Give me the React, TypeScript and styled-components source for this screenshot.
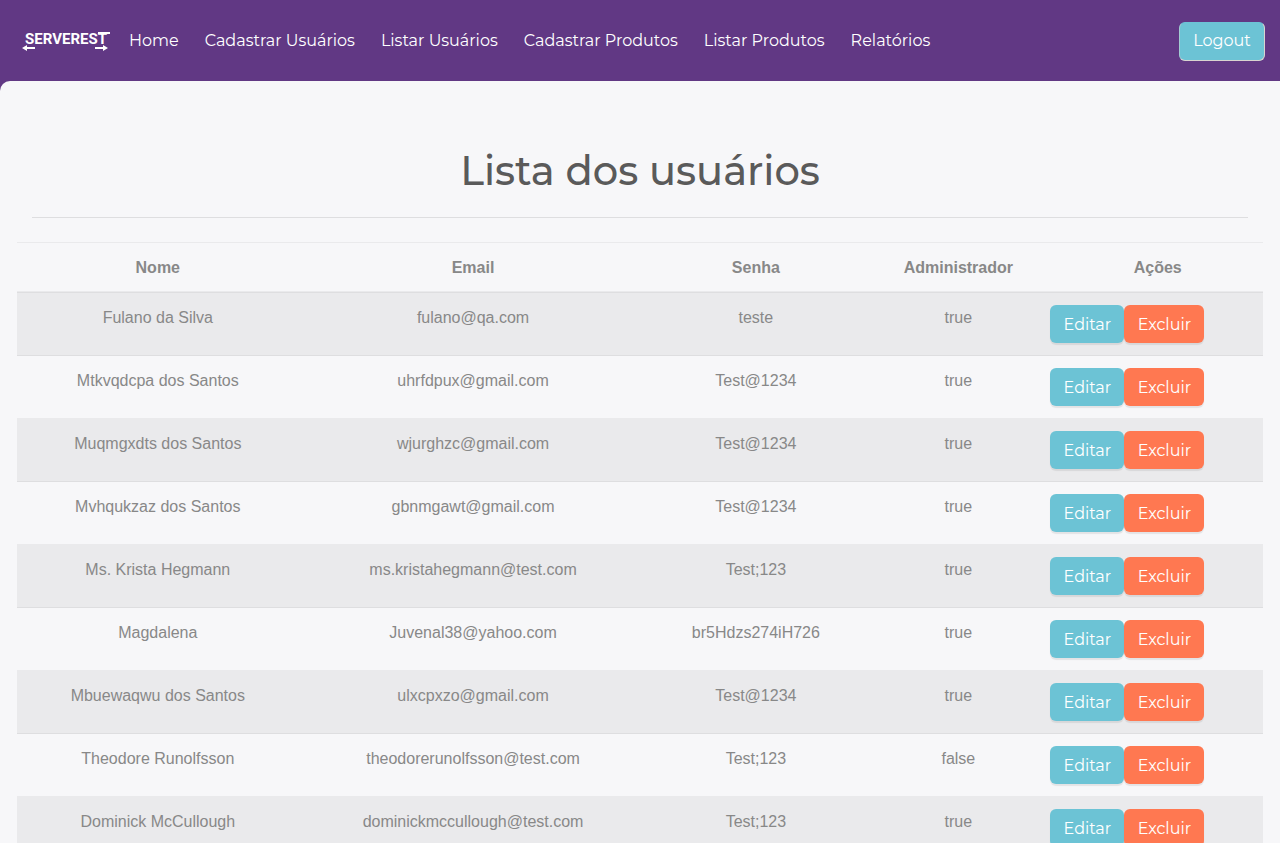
import React from "react";
import styled, { createGlobalStyle } from "styled-components";

const GlobalStyle = createGlobalStyle`
  *, *::before, *::after { box-sizing: border-box; }
  body {
    margin: 0;
    background: #613884;
    color: #888888;
    font-family: "Liberation Sans", Arial, sans-serif;
    font-size: 16px;
    line-height: 24px;
  }
`;

const display = `Montserrat, Inter, sans-serif`;

const Navbar = styled.nav`
  display: flex;
  align-items: flex-start;
  padding: 22px 15px 20px 21px;
`;

const Brand = styled.a`
  display: block;
  width: 90px;
  height: 26px;
  margin: 6px 5px 0 0;
`;

const NavList = styled.ul`
  display: flex;
  flex: 1;
  margin: 0;
  padding: 0;
  list-style: none;
`;

const NavLink = styled.a`
  display: block;
  padding: 7px 13px;
  color: #ffffff;
  font-family: ${display};
  font-size: 16px;
  text-decoration: none;
  white-space: nowrap;
`;

const Button = styled.button<{ $tone?: "danger"; $width: number }>`
  width: ${(p) => p.$width}px;
  height: 38px;
  padding: 2px 0 0;
  border: 0;
  border-radius: 6px;
  background: ${(p) => (p.$tone === "danger" ? "#ff7851" : "#6cc3d5")};
  color: #ffffff;
  font-family: ${display};
  font-size: 16px;
  line-height: 24px;
  cursor: pointer;
  box-shadow: 0 2px 1px rgba(0, 0, 0, 0.08);
`;

const LogoutButton = styled(Button)`
  height: 39px;
  padding: 0 0 1px;
  border: 1px solid #d9d4d0;
  border-top-color: #6cc3d5;
  border-left-color: #a3cbd2;
  box-shadow: none;
`;

const Panel = styled.main`
  padding: 66px 17px 32px;
  border-top-left-radius: 10px;
  background: #f7f7f9;
`;

const Title = styled.h1`
  margin: 0 15px 24px;
  padding-bottom: 22px;
  border-bottom: 1px solid #dedee0;
  color: #5a5a5a;
  font-family: ${display};
  font-size: 40px;
  font-weight: 500;
  line-height: 48px;
  text-align: center;
`;

const Table = styled.table`
  width: 100%;
  table-layout: fixed;
  border-collapse: collapse;
  text-align: center;
`;

const Col = styled.col<{ $share: number }>`
  width: ${(p) => p.$share}%;
`;

const HeadCell = styled.th`
  padding: 13px 12px 11px;
  border-top: 1px solid rgba(0, 0, 0, 0.05);
  border-bottom: 2px solid rgba(0, 0, 0, 0.05);
  font-weight: 700;
`;

const Row = styled.tr`
  &:nth-child(odd) {
    background: rgba(0, 0, 0, 0.05);
  }
`;

const Cell = styled.td`
  padding: 13px 12px 11px;
  border-top: 1px solid rgba(0, 0, 0, 0.05);
  vertical-align: top;
`;

const ActionCell = styled(Cell)`
  padding: 12px 0;
`;

const Actions = styled.div`
  display: flex;
  margin-left: -2px;
`;

const links = [
  "Home",
  "Cadastrar Usuários",
  "Listar Usuários",
  "Cadastrar Produtos",
  "Listar Produtos",
  "Relatórios",
];

const users = [
  ["Fulano da Silva", "fulano@qa.com", "teste", "true"],
  ["Mtkvqdcpa dos Santos", "uhrfdpux@gmail.com", "Test@1234", "true"],
  ["Muqmgxdts dos Santos", "wjurghzc@gmail.com", "Test@1234", "true"],
  ["Mvhqukzaz dos Santos", "gbnmgawt@gmail.com", "Test@1234", "true"],
  ["Ms. Krista Hegmann", "ms.kristahegmann@test.com", "Test;123", "true"],
  ["Magdalena", "Juvenal38@yahoo.com", "br5Hdzs274iH726", "true"],
  ["Mbuewaqwu dos Santos", "ulxcpxzo@gmail.com", "Test@1234", "true"],
  ["Theodore Runolfsson", "theodorerunolfsson@test.com", "Test;123", "false"],
  ["Dominick McCullough", "dominickmccullough@test.com", "Test;123", "true"],
];

const Logo = () => (
  <svg width="90" height="26" viewBox="0 0 90 26" role="img" aria-label="ServeRest">
    <text
      x="45"
      y="16"
      textAnchor="middle"
      fill="#ffffff"
      fontFamily="Roboto, sans-serif"
      fontSize="15"
      fontWeight="700"
    >
      SERVEREST
    </text>
    <path d="M77 4h12v2H77z" fill="#ffffff" />
    <path d="M1 20l5-3v2h8v2H6v2z M87 20l-5-3v2h-8v2h8v2z" fill="#ffffff" />
  </svg>
);

export default function App() {
  return (
    <>
      <GlobalStyle />
      <Navbar>
        <Brand href="#home"><Logo /></Brand>
        <NavList>
          {links.map((label) => (
            <li key={label}><NavLink href="#">{label}</NavLink></li>
          ))}
        </NavList>
        <LogoutButton type="button" $width={86}>Logout</LogoutButton>
      </Navbar>
      <Panel>
        <Title>Lista dos usuários</Title>
        <Table>
          <colgroup>
            {[22.6, 28, 17.4, 15.1, 16.9].map((share, i) => (
              <Col key={i} $share={share} />
            ))}
          </colgroup>
          <thead>
            <tr>
              {["Nome", "Email", "Senha", "Administrador", "Ações"].map((label) => (
                <HeadCell key={label} scope="col">{label}</HeadCell>
              ))}
            </tr>
          </thead>
          <tbody>
            {users.map((user) => (
              <Row key={user[1]}>
                {user.map((value, i) => <Cell key={i}>{value}</Cell>)}
                <ActionCell>
                  <Actions>
                    <Button type="button" $width={74}>Editar</Button>
                    <Button type="button" $width={80} $tone="danger">Excluir</Button>
                  </Actions>
                </ActionCell>
              </Row>
            ))}
          </tbody>
        </Table>
      </Panel>
    </>
  );
}
